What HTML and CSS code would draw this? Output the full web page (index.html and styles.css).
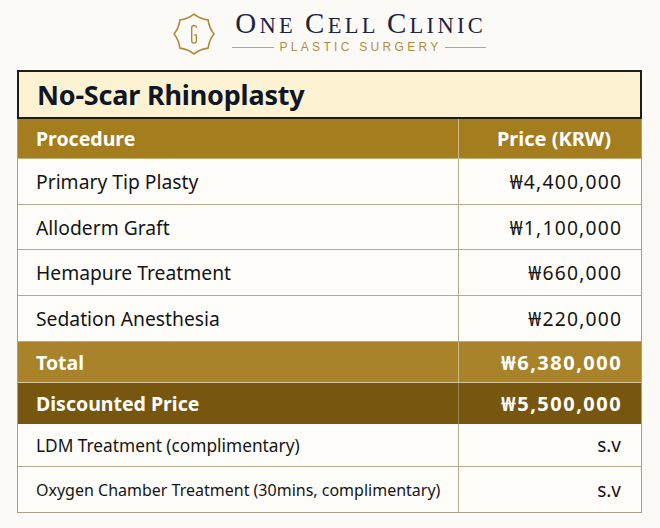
FILE: index.html
```html
<!DOCTYPE html>
<html>
<head>
<meta charset="utf-8">
<link rel="stylesheet" href="styles.css">
</head>
<body>
<div class="page">
  <header class="brand">
    <svg class="badge" width="42" height="42" viewBox="0 0 40 40">
      <path d="M20 1 Q25.91 5.73 33.43 6.57 Q34.27 14.09 39 20 Q34.27 25.91 33.43 33.43 Q25.91 34.27 20 39 Q14.09 34.27 6.57 33.43 Q5.73 25.91 1 20 Q5.73 14.09 6.57 6.57 Q14.09 5.73 20 1 Z" fill="none" stroke="#b08a3a" stroke-width="1.5" stroke-linejoin="miter"/>
      <path d="M22.4 13.6 C21.6 11.2 17.8 11.4 17.8 14.2 L17.8 26.4 C17.8 29.4 22.3 29.4 22.3 26.4 L22.3 20.8 L20.4 20.8" fill="none" stroke="#b08a3a" stroke-width="1.3" stroke-linecap="round" stroke-linejoin="round"/>
    </svg>
    <div class="wordmark">
      <div class="name"><span class="big">O</span>NE <span class="big">C</span>ELL <span class="big">C</span>LINIC</div>
      <div class="sub"><span class="rule"></span><span class="subtext">PLASTIC SURGERY</span><span class="rule"></span></div>
    </div>
  </header>

  <section class="sheet">
    <div class="title">No-Scar Rhinoplasty</div>
    <div class="row head"><div class="c1">Procedure</div><div class="c2">Price (KRW)</div></div>
    <div class="row item"><div class="c1">Primary Tip Plasty</div><div class="c2 num">₩4,400,000</div></div>
    <div class="row item h45"><div class="c1">Alloderm Graft</div><div class="c2 num">₩1,100,000</div></div>
    <div class="row item"><div class="c1">Hemapure Treatment</div><div class="c2 num">₩660,000</div></div>
    <div class="row item"><div class="c1">Sedation Anesthesia</div><div class="c2 num">₩220,000</div></div>
    <div class="row total"><div class="c1">Total</div><div class="c2 num">₩6,380,000</div></div>
    <div class="row disc"><div class="c1">Discounted Price</div><div class="c2 num">₩5,500,000</div></div>
    <div class="row item ldm"><div class="c1">LDM Treatment (complimentary)</div><div class="c2 sv">s.v</div></div>
    <div class="row item oxy last"><div class="c1">Oxygen Chamber Treatment (30mins, complimentary)</div><div class="c2 sv">s.v</div></div>
  </section>
</div>
</body>
</html>
```

FILE: styles.css
```css
* { box-sizing: border-box; }
html, body { margin: 0; padding: 0; }
body {
  background: #fbfaf6;
  font-family: "Noto Sans", "Open Sans", sans-serif;
  color: #151515;
  width: 660px;
  height: 528px;
  overflow: hidden;
}
.page {
  padding: 12px 18px 0 17px;
}
.brand {
  display: flex;
  justify-content: center;
  align-items: center;
  gap: 17px;
  height: 44px;
  margin-left: 0;
}
.badge { display: block; margin-top: -1px; }
.wordmark {
  display: flex;
  flex-direction: column;
  align-items: center;
  width: 254px;
}
.name {
  font-family: "Liberation Serif", "DejaVu Serif", serif;
  font-size: 22.5px;
  line-height: 26px;
  letter-spacing: 3.3px;
  margin-right: -3.3px;
  color: #1d2440;
  white-space: nowrap;
  margin-top: -4px;
}
.name .big { font-size: 29px; }
.sub {
  display: flex;
  align-items: center;
  width: 100%;
  gap: 6px;
  margin-top: 1px;
}
.rule { flex: 1; height: 1px; background: #c4a461; }
.subtext {
  font-family: "Liberation Sans", sans-serif;
  font-size: 12px;
  letter-spacing: 3.3px;
  color: #b08d3c;
  margin-right: -3px;
  line-height: 14px;
}
.sheet {
  margin-top: 14px;
  width: 625px;
  border: 1px solid #aa9f88;
  border-top: none;
  background: #fefdfa;
}
.title {
  height: 49px;
  margin: 0 -1px;
  border: 2px solid #1c1c1c;
  background: #fdf3d3;
  font-weight: 700;
  font-size: 27px;
  color: #0f1626;
  padding-left: 18px;
  display: flex;
  align-items: center;
  letter-spacing: -0.2px;
}
.row {
  display: grid;
  grid-template-columns: 441px 1fr;
  height: 46px;
  border-bottom: 1px solid #b7a88a;
  white-space: nowrap;
}
.row .c1 {
  display: flex;
  align-items: center;
  padding-left: 18px;
  border-right: 1px solid #b7a88a;
}
.row .c2 {
  display: flex;
  align-items: center;
  justify-content: flex-end;
  padding-right: 20px;
}
.num { letter-spacing: 1.2px; margin-right: -1.2px; }
.item { font-size: 19.3px; }
.h45 { height: 45px; }
.head {
  height: 40px;
  background: #a47d1f;
  color: #fff;
  font-weight: 700;
  font-size: 19.5px;
  border-bottom-color: #c9b27a;
}
.head .c1 { border-right-color: #cdb887; }
.head .c2 { padding-right: 30px; font-size: 20px; }
.total {
  height: 41px;
  background: #a8832a;
  color: #fff;
  font-weight: 700;
  font-size: 19.5px;
  border-bottom-color: #d8c79e;
}
.total .c1 { border-right-color: #cdb887; }
.total .num, .disc .num { font-size: 20px; letter-spacing: 1.5px; }
.disc {
  height: 41px;
  background: #77570f;
  color: #fff;
  font-weight: 700;
  font-size: 19.5px;
  border-bottom: none;
}
.disc .c1 { border-right-color: #9c8550; }
.ldm { height: 43px; font-size: 17.3px; }
.oxy { height: 45px; font-size: 16px; }
.sv { font-size: 19px; }
.last { border-bottom: none; }
```
